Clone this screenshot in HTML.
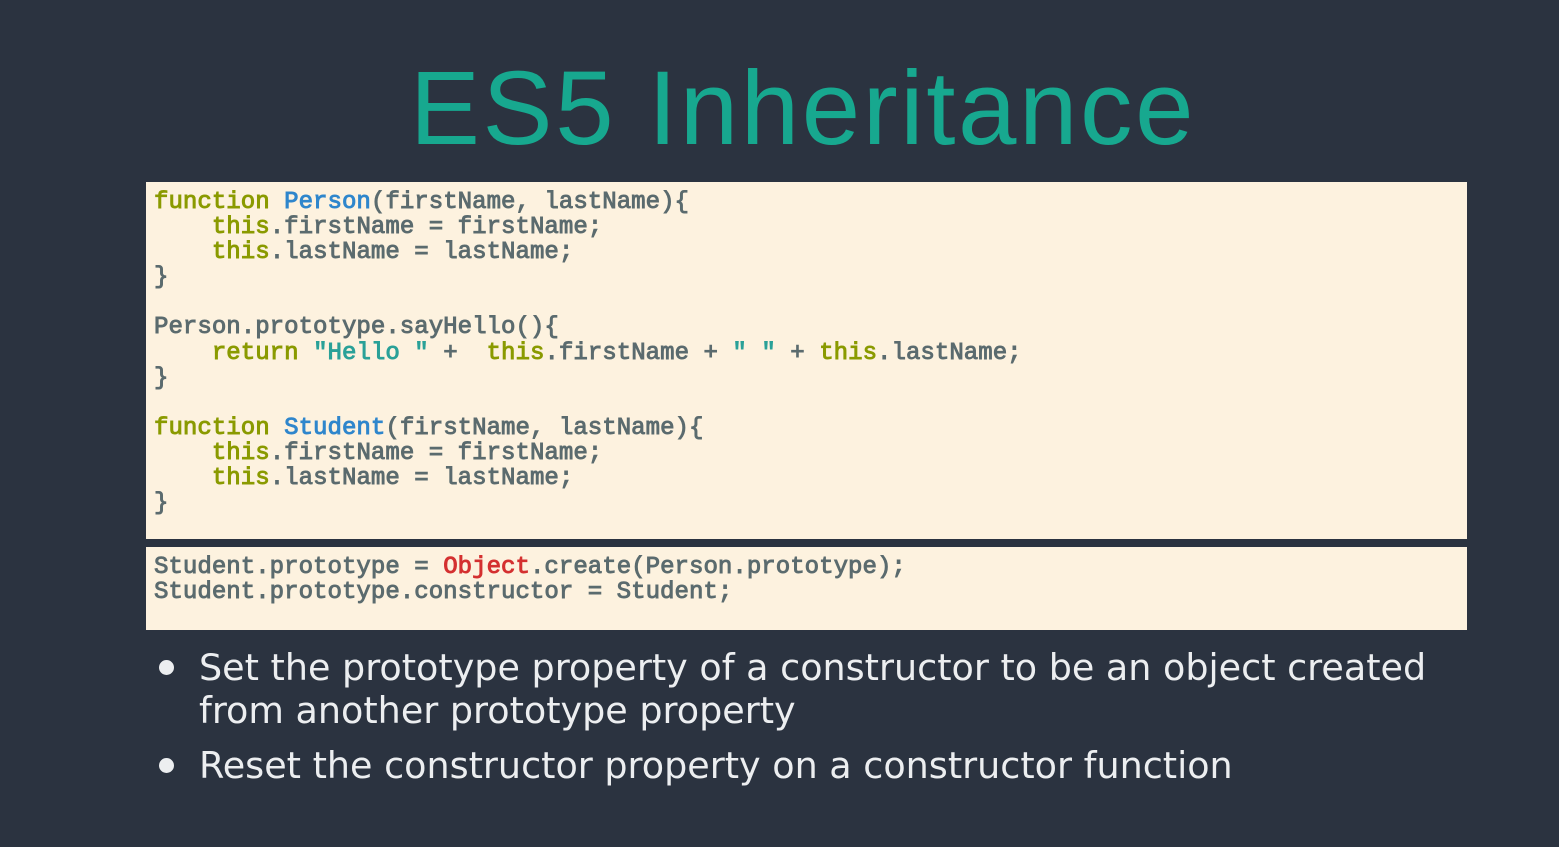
<!DOCTYPE html>
<html><head><style>
body{margin:0;width:1559px;height:847px;background:#2b3340;overflow:hidden;position:relative;font-family:"Liberation Sans",sans-serif}
h1{position:absolute;top:49px;left:0;width:1606px;text-align:center;margin:0;font-weight:normal;font-size:105px;color:#17a88f;letter-spacing:2.6px}
.box{position:absolute;left:146px;width:1321px;background:#fdf2df}
pre{margin:0;position:absolute;left:8px;font-family:"Liberation Mono",monospace;font-size:24.1px;line-height:25.1px;color:#5b6b6e;font-weight:normal;-webkit-text-stroke:0.9px}
.k{color:#8a9a00}.b{color:#2f86cc}.s{color:#2aa198}.r{color:#d43030}
ul{position:absolute;left:155px;top:646px;margin:0;padding:0;list-style:none;color:#eceef0;font-family:"DejaVu Sans",sans-serif;font-size:36.5px;line-height:43px;width:1320px}
li{position:relative;padding-left:44px;margin-bottom:12px}
li:before{content:"";position:absolute;left:4px;top:14px;width:15px;height:15px;border-radius:50%;background:#eceef0}
</style></head><body>
<h1>ES5 Inheritance</h1>
<div class="box" style="top:182px;height:357px"><pre style="top:8px"><span class="k">function</span> <span class="b">Person</span>(firstName, lastName){
    <span class="k">this</span>.firstName = firstName;
    <span class="k">this</span>.lastName = lastName;
}

Person.prototype.sayHello(){
    <span class="k">return</span> <span class="s">"Hello "</span> +  <span class="k">this</span>.firstName + <span class="s">" "</span> + <span class="k">this</span>.lastName;
}

<span class="k">function</span> <span class="b">Student</span>(firstName, lastName){
    <span class="k">this</span>.firstName = firstName;
    <span class="k">this</span>.lastName = lastName;
}</pre></div>
<div class="box" style="top:547px;height:83px"><pre style="top:8px">Student.prototype = <span class="r">Object</span>.create(Person.prototype);
Student.prototype.constructor = Student;</pre></div>
<ul>
<li>Set the prototype property of a constructor to be an object created from another prototype property</li>
<li>Reset the constructor property on a constructor function</li>
</ul>
</body></html>
